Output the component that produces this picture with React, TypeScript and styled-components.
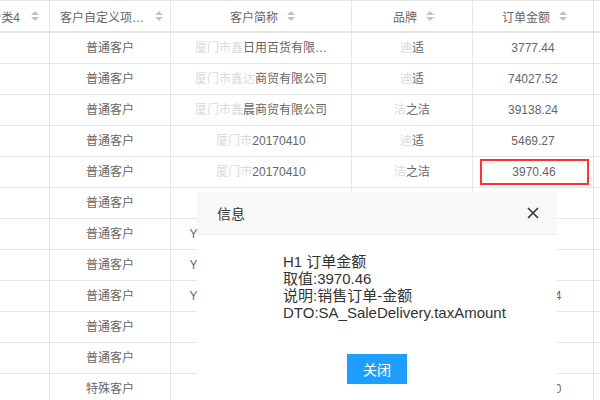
import styled, { createGlobalStyle } from "styled-components"

const GlobalStyle = createGlobalStyle`
    html, body {
        margin: 0;
        padding: 0;
        background: #fff;
        overflow: hidden;
    }
    body {
        font-family: "Liberation Sans", "Noto Sans CJK SC", sans-serif;
    }
`

type Column = {
    key: string,
    title: string,
    width: number,
    align?: "center" | "flex-end",
}

type Cell = {
    hidden?: string,
    text?: string,
}

type Row = {
    type: string,
    name: Cell,
    brand: Cell,
    amount: string,
    mark?: boolean,
}

const columns: Column[] = [
    { key: "type4", title: "客户自定义分类4", width: 120, align: "flex-end" },
    { key: "custom", title: "客户自定义项目1", width: 121 },
    { key: "name", title: "客户简称", width: 181 },
    { key: "brand", title: "品牌", width: 121 },
    { key: "amount", title: "订单金额", width: 121 },
    { key: "extra", title: "备注", width: 120 },
]

const gridColumns = columns.map(c => `${c.width}px`).join(" ")

const rows: Row[] = [
    { type: "普通客户", name: { hidden: "厦门市鑫", text: "日用百货有限…" }, brand: { hidden: "迪", text: "适" }, amount: "3777.44" },
    { type: "普通客户", name: { hidden: "厦门市鑫达", text: "商贸有限公司" }, brand: { hidden: "迪", text: "适" }, amount: "74027.52" },
    { type: "普通客户", name: { hidden: "厦门市鑫", text: "晨商贸有限公司" }, brand: { hidden: "洁", text: "之洁" }, amount: "39138.24" },
    { type: "普通客户", name: { hidden: "厦门市", text: "20170410" }, brand: { hidden: "迪", text: "适" }, amount: "5469.27" },
    { type: "普通客户", name: { hidden: "厦门市", text: "20170410" }, brand: { hidden: "洁", text: "之洁" }, amount: "3970.46", mark: true },
    { type: "普通客户", name: {}, brand: {}, amount: "" },
    { type: "普通客户", name: { text: "Y-厦门市鑫达商贸有限公司" }, brand: { text: "迪适" }, amount: "2381.60" },
    { type: "普通客户", name: { text: "Y-厦门市鑫达商贸有限公司" }, brand: { text: "迪适" }, amount: "1190.80" },
    { type: "普通客户", name: { text: "Y-厦门市鑫达商贸有限公司" }, brand: { text: "洁之洁" }, amount: "123456.64" },
    { type: "普通客户", name: {}, brand: {}, amount: "" },
    { type: "普通客户", name: {}, brand: {}, amount: "" },
    { type: "特殊客户", name: {}, brand: {}, amount: "123456.60" },
]

function SortIcon() {
    return (
        <SortSvg width="10" height="12" viewBox="0 0 10 12">
            <path d="M1 5 L5 1 L9 5 Z" fill="#c2c2c2" />
            <path d="M1 7 L5 11 L9 7 Z" fill="#c2c2c2" />
        </SortSvg>
    )
}

function CloseIcon() {
    return (
        <svg width="12" height="12" viewBox="0 0 12 12">
            <path d="M1 1 L11 11 M11 1 L1 11" stroke="#333" strokeWidth="1.6" />
        </svg>
    )
}

function TextCell({ cell }: { cell: Cell }) {
    return (
        <Td>
            <CellText>
                {cell.hidden && <Obscured>{cell.hidden}</Obscured>}
                {cell.text}
            </CellText>
        </Td>
    )
}

export default function App() {
    return (
        <Page>
            <GlobalStyle />
            <Grid>
                <HeadRow>
                    {columns.map(c => (
                        <Th key={c.key} $align={c.align ?? "center"}>
                            <HeadLabel $keep={c.align === "flex-end"}>{c.title}</HeadLabel>
                            <SortIcon />
                        </Th>
                    ))}
                </HeadRow>
                {rows.map((r, i) => (
                    <BodyRow key={i}>
                        <Td />
                        <Td><CellText>{r.type}</CellText></Td>
                        <TextCell cell={r.name} />
                        <TextCell cell={r.brand} />
                        <Td>
                            {r.mark
                                ? <Marked>{r.amount}</Marked>
                                : <CellText>{r.amount}</CellText>}
                        </Td>
                        <Td />
                    </BodyRow>
                ))}
            </Grid>

            <Dialog>
                <DialogHeader>
                    <DialogTitle>信息</DialogTitle>
                    <CloseButton><CloseIcon /></CloseButton>
                </DialogHeader>
                <DialogBody>
                    <InfoLine>H1 订单金额</InfoLine>
                    <InfoLine>取值:3970.46</InfoLine>
                    <InfoLine>说明:销售订单-金额</InfoLine>
                    <InfoLine>DTO:SA_SaleDelivery.taxAmount</InfoLine>
                </DialogBody>
                <DialogFooter>
                    <PrimaryButton>关闭</PrimaryButton>
                </DialogFooter>
            </Dialog>
        </Page>
    )
}

const Page = styled.div`
    position: relative;
    width: 600px;
    height: 400px;
    overflow: hidden;
`

const Grid = styled.div`
    margin-left: -70px;
    width: max-content;
    border-top: 1px solid #e6e6e6;
    font-size: 12px;
    color: #666;
`

const HeadRow = styled.div`
    display: grid;
    grid-template-columns: ${gridColumns};
    height: 32px;
`

const BodyRow = styled.div`
    display: grid;
    grid-template-columns: ${gridColumns};
    height: 31px;
`

const Th = styled.div<{ $align: string }>`
    box-sizing: border-box;
    display: flex;
    align-items: center;
    justify-content: ${p => p.$align};
    gap: ${p => (p.$align === "center" ? "8px" : "10px")};
    padding: ${p => (p.$align === "center" ? "0 6px 0 10px" : "0 9px 0 0")};
    border-right: 1px solid #e6e6e6;
    border-bottom: 2px solid #e6e6e6;
    overflow: hidden;
`

const HeadLabel = styled.span<{ $keep: boolean }>`
    white-space: nowrap;
    overflow: hidden;
    text-overflow: ellipsis;
    min-width: 0;
    flex: ${p => (p.$keep ? "none" : "0 1 auto")};
`

const SortSvg = styled.svg`
    flex: none;
`

const Td = styled.div`
    box-sizing: border-box;
    display: flex;
    align-items: center;
    justify-content: center;
    border-right: 1px solid #e6e6e6;
    border-bottom: 1px solid #e6e6e6;
    overflow: hidden;
`

const CellText = styled.span`
    white-space: nowrap;
    line-height: 16px;
`

const Obscured = styled.span`
    color: #dadada;
`

const Marked = styled.div`
    box-sizing: border-box;
    width: 109px;
    height: 26px;
    margin-left: 2px;
    line-height: 22px;
    text-align: center;
    border: 2px solid #f33;
`

const Dialog = styled.div`
    position: absolute;
    left: 197px;
    top: 192px;
    width: 360px;
    height: 230px;
    background: #fff;
    display: flex;
    flex-direction: column;
`

const DialogHeader = styled.div`
    height: 42px;
    background: #f8f8f8;
    border-bottom: 1px solid #eee;
    display: flex;
    align-items: center;
    justify-content: space-between;
    padding: 0 18px 0 20px;
`

const DialogTitle = styled.span`
    font-size: 14px;
    color: #333;
`

const CloseButton = styled.span`
    display: flex;
    align-items: center;
    cursor: pointer;
`

const DialogBody = styled.div`
    padding: 18px 0 0 86px;
    font-size: 15px;
    color: #333;
`

const InfoLine = styled.div`
    line-height: 17px;
    white-space: nowrap;
`

const DialogFooter = styled.div`
    display: flex;
    justify-content: center;
    padding-top: 33px;
`

const PrimaryButton = styled.button`
    width: 60px;
    height: 30px;
    border: none;
    background: #1e9fff;
    color: #fff;
    font-size: 14px;
    font-family: inherit;
    padding: 0;
`
